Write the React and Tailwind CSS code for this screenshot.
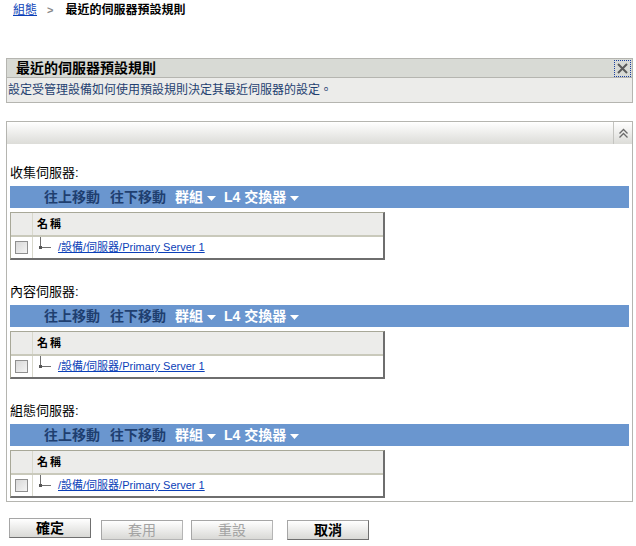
const font = { fontFamily: '"Liberation Sans", "Noto Sans CJK TC", sans-serif' };

const Toolbar = () => (
  <div className="h-[22px] bg-[#6a96cf] flex items-center pl-[34px] text-[14px] font-bold">
    <span className="text-[#1f3f70]">往上移動</span>
    <span className="text-[#1f3f70] ml-[10px]">往下移動</span>
    <span className="text-white ml-[9px] flex items-center">
      群組
      <svg width="9" height="5" viewBox="0 0 9 5" className="ml-[4px] mt-[2px]">
        <path d="M0 0h9L4.5 5z" fill="#fff" />
      </svg>
    </span>
    <span className="text-white ml-[8px] flex items-center">
      L4 交換器
      <svg width="9" height="5" viewBox="0 0 9 5" className="ml-[4px] mt-[2px]">
        <path d="M0 0h9L4.5 5z" fill="#fff" />
      </svg>
    </span>
  </div>
);

const ServerTable = () => (
  <div className="w-[375px] border border-t-[#a8a898] border-l-[#a8a898] border-r-[#6e6e6e] border-b-[#6e6e6e] border-b-2 border-r-2">
    <div className="flex h-[24px] bg-[#ececea] border-b-2 border-[#c9c9bb]">
      <div className="w-[22px] border-r border-[#d8d8cc]" />
      <div className="pl-[4px] flex items-center text-[11px] font-bold tracking-[2px] text-black">名稱</div>
    </div>
    <div className="flex h-[21px] bg-white">
      <div className="w-[22px] border-r border-[#d8d8cc] flex items-center justify-center">
        <div className="w-[13px] h-[13px] border border-[#8f8f8f] bg-gradient-to-br from-[#d8d8d8] to-[#f4f4f4]" />
      </div>
      <div className="relative w-[25px]">
        <div className="absolute left-[7px] top-0 h-[11px] w-px bg-[#707070]" />
        <div className="absolute left-[7px] top-[10px] h-px w-[11px] bg-[#707070]" />
        <div className="absolute left-[6px] top-[9px] h-[3px] w-[3px] bg-[#555]" />
      </div>
      <a href="#" className="flex items-center text-[11px] text-[#0b3fb8] underline">
        /設備/伺服器/Primary Server 1
      </a>
    </div>
  </div>
);

const Section = ({ label, first }) => (
  <div className={first ? "mt-[21px]" : "mt-[24px]"}>
    <div className="h-[16px] leading-[16px] text-[13px] text-black">{label}</div>
    <div className="mt-[5px]">
      <Toolbar />
    </div>
    <div className="mt-[4px]">
      <ServerTable />
    </div>
  </div>
);

const Btn = ({ children, disabled }) => (
  <button
    className={`w-[82px] h-[20px] border border-[#a6a6a6] border-b-[#6f6f6f] border-r-[#6f6f6f] bg-gradient-to-b from-white to-[#d9d9d6] text-[14px] leading-[16px] ${
      disabled ? "text-[#a3a3a3] border-b-[#b5b5b5] border-r-[#b5b5b5]" : "text-black font-bold"
    }`}
  >
    {children}
  </button>
);

export default function App() {
  return (
    <div className="w-[636px] h-[546px] bg-white relative" style={font}>
      <div className="h-[20px] flex items-center pl-[13px] text-[12px]">
        <a href="#" className="text-[#0b3fb8] underline">組態</a>
        <span className="ml-[10px] text-[#888] font-bold text-[11px]">&gt;</span>
        <span className="ml-[12px] font-bold text-black">最近的伺服器預設規則</span>
      </div>

      <div className="mt-[38px] mx-[6px] border border-[#b5b5b0] w-[627px]">
        <div className="h-[19px] bg-[#d8dad5] border-b border-[#b5b5b0] flex items-center justify-between">
          <span className="pl-[9px] text-[14px] font-bold text-black">最近的伺服器預設規則</span>
          <div className="w-[17px] h-[17px] mr-px border border-dotted border-[#1a3fa0] flex items-center justify-center">
            <svg width="11" height="11" viewBox="0 0 11 11">
              <path d="M1 1L10 10M10 1L1 10" stroke="#5a5a5a" strokeWidth="2" />
            </svg>
          </div>
        </div>
        <div className="h-[24px] bg-[#ececea] flex items-center pl-[1px] text-[12px] text-[#1f3f70]">
          設定受管理設備如何使用預設規則決定其最近伺服器的設定。
        </div>
      </div>

      <div className="mt-[18px] mx-[6px] w-[627px] border border-[#b5b5b0] pb-[3px]">
        <div className="h-[22px] bg-gradient-to-b from-white to-[#dcdcd8] flex justify-end">
          <div className="w-[19px] border-l border-[#c4c4c0] flex items-center justify-center">
            <svg width="11" height="11" viewBox="0 0 11 11">
              <path d="M1.5 5.5L5.5 1.5L9.5 5.5M1.5 9.5L5.5 5.5L9.5 9.5" stroke="#6a6a6a" strokeWidth="1.3" fill="none" />
            </svg>
          </div>
        </div>
        <div className="px-[3px]">
          <Section label="收集伺服器:" first />
          <Section label="內容伺服器:" />
          <Section label="組態伺服器:" />
        </div>
      </div>

      <div className="mt-[16px] pl-[9px] flex">
        <Btn>確定</Btn>
        <div className="ml-[10px]"><Btn disabled>套用</Btn></div>
        <div className="ml-[8px]"><Btn disabled>重設</Btn></div>
        <div className="ml-[14px]"><Btn>取消</Btn></div>
      </div>
    </div>
  );
}
